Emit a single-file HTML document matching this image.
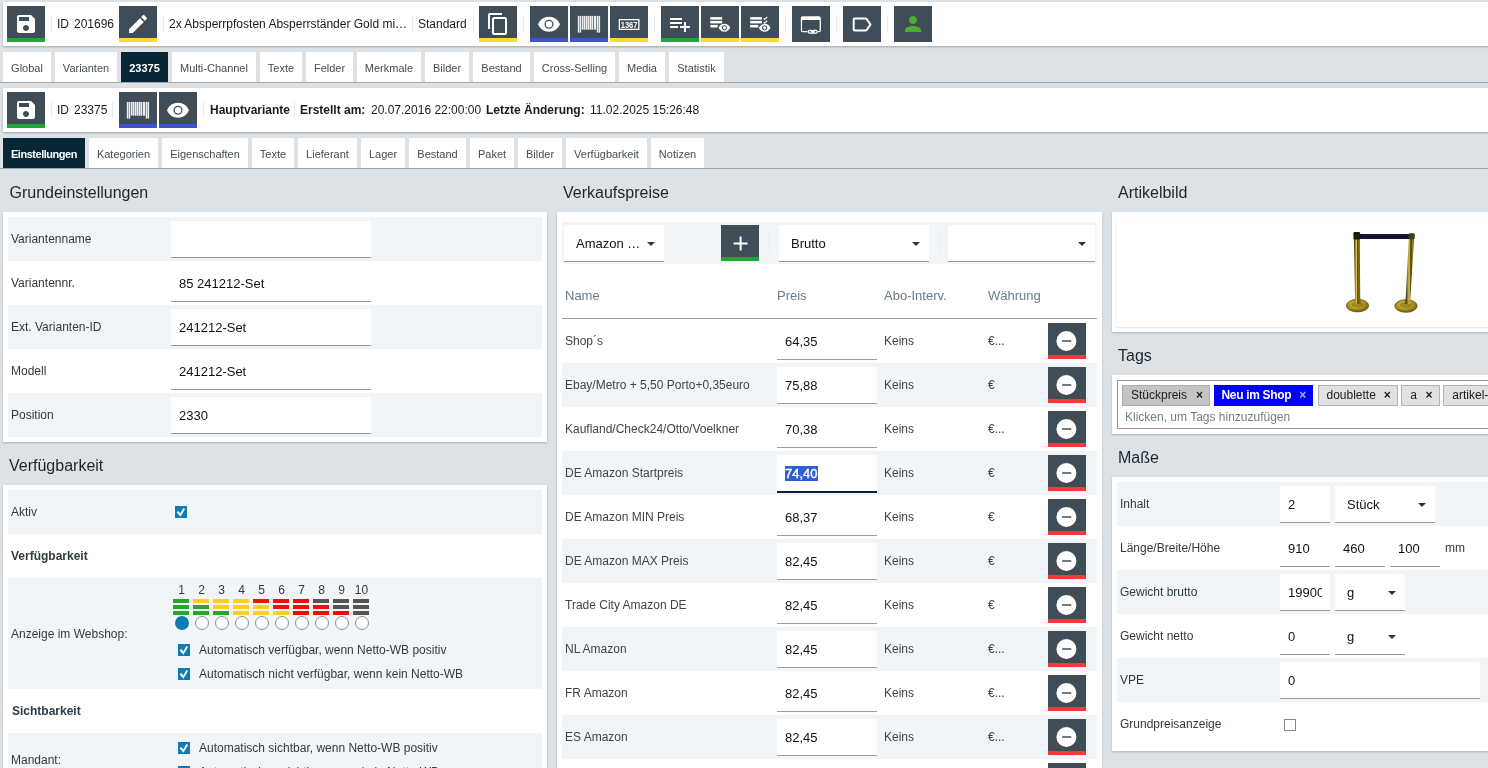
<!DOCTYPE html>
<html lang="de"><head><meta charset="utf-8"><title>Artikel 201696</title>
<style>
*{box-sizing:border-box;margin:0;padding:0}
html,body{width:1488px;height:768px;overflow:hidden}
body{background:#dde2e6;font-family:"Liberation Sans",sans-serif;color:#141c22;position:relative;font-size:12px}
.abs,.t,.btn,.sep,.tab,.inp,.chk,.panel,.row,.bar{position:absolute}
.bar{background:#fff;box-shadow:0 1px 2px rgba(0,0,0,.28)}
.btn{width:38px;height:36px;background:#3e4d57;display:flex;align-items:center;justify-content:center}
.btn svg{display:block}
.sep{width:1px;background:#e8ebee}
.t{white-space:nowrap;line-height:16px}
.b{font-weight:bold}
.tab{height:30px;background:#fff;color:#414e57;font-size:11px;line-height:32px;text-align:center;white-space:nowrap}
.tab.on{background:#072736;color:#fff;font-weight:bold}
.line{position:absolute;left:0;width:1488px;height:1px;background:#9ca6ac}
.h{position:absolute;font-size:16px;line-height:20px;color:#1c262d;white-space:nowrap}
.panel{background:#fff;box-shadow:0 1px 2px rgba(0,0,0,.22)}
.row{height:44px}
.row.alt{background:#f1f5f8}
.lbl{font-size:12px;color:#2f3b43}
.inp{height:37px;background:#fff;border-bottom:1px solid #929da4;font-size:13px;line-height:37.5px;padding-left:8px;white-space:nowrap;overflow:hidden;color:#0c1216}
.inp.tr{background:transparent}
.arw{position:absolute;right:9px;top:17px;line-height:0}
.chk{width:12px;height:12px;background:#fff;border:1px solid #7d8890}
.chk.on{background:#0f7bb4;border:none}
.chk svg{display:block}
.th{font-size:13px;color:#6b7a84}
.td{font-size:12px;color:#3a464e}
.tag{position:absolute;height:20.5px;top:385.2px;font-size:12px;line-height:19px;border:1px solid #b4b4b4;background:#e1e1e1;color:#1c1c1c;white-space:nowrap;padding-left:8px}
.tag i{position:absolute;right:6px;top:0;font-style:normal;font-weight:bold;font-size:12px}
#app{position:absolute;left:0;top:0;width:1488px;height:768px;overflow:hidden;will-change:transform;background:#dde2e6}
</style></head><body><div id="app">

<div class="bar" style="left:3px;top:2px;width:1490px;height:44px"></div>
<div class="btn " style="left:7px;top:6px;box-shadow:inset 0 -4px 0 #1fa538"><svg viewBox="0 0 24 24" width="24" height="24" fill="#fff"><path d="M17 3H5c-1.11 0-2 .9-2 2v14c0 1.1.89 2 2 2h14c1.1 0 2-.9 2-2V7l-4-4zm-5 16c-1.66 0-3-1.34-3-3s1.34-3 3-3 3 1.34 3 3-1.34 3-3 3zm3-10H5V5h10v4z"/></svg></div>
<div class="sep" style="left:51px;top:16px;height:16px"></div>
<div class="t " style="left:57px;top:16px;">ID</div>
<div class="t " style="left:74px;top:16px;">201696</div>
<div class="btn " style="left:119px;top:6px;box-shadow:inset 0 -4px 0 #ffd83a"><svg viewBox="0 0 24 24" width="24" height="24" fill="#fff"><path d="M3 17.25V21h3.75L17.81 9.94l-3.75-3.75L3 17.25zM20.71 7.04c.39-.39.39-1.02 0-1.41l-2.34-2.34c-.39-.39-1.02-.39-1.41 0l-1.83 1.83 3.75 3.75 1.83-1.83z"/></svg></div>
<div class="sep" style="left:163px;top:16px;height:16px"></div>
<div class="t " style="left:169px;top:16px;">2x Absperrpfosten Absperrständer Gold mi…</div>
<div class="sep" style="left:412px;top:16px;height:16px"></div>
<div class="t " style="left:418px;top:16px;">Standard</div>
<div class="sep" style="left:473px;top:16px;height:16px"></div>
<div class="btn " style="left:479px;top:6px;box-shadow:inset 0 -4px 0 #ffd83a"><svg viewBox="0 0 24 24" width="24" height="24" fill="#fff"><path d="M16 1H4c-1.1 0-2 .9-2 2v14h2V3h12V1zm3 4H8c-1.1 0-2 .9-2 2v14c0 1.1.9 2 2 2h11c1.1 0 2-.9 2-2V7c0-1.1-.9-2-2-2zm0 16H8V7h11v14z"/></svg></div>
<div class="sep" style="left:523px;top:16px;height:16px"></div>
<div class="btn " style="left:530px;top:6px;box-shadow:inset 0 -4px 0 #3f51d5"><svg viewBox="0 0 24 24" width="24" height="24" fill="#fff"><path d="M12 4.5C7 4.5 2.73 7.61 1 12c1.73 4.39 6 7.5 11 7.5s9.27-3.11 11-7.5c-1.73-4.39-6-7.5-11-7.5zM12 16.5a4.5 4.5 0 1 1 0-9 4.5 4.5 0 0 1 0 9zm0-7.7a3.2 3.2 0 1 0 0 6.4 3.2 3.2 0 0 0 0-6.4z" transform="translate(0 .2)"/></svg></div>
<div class="btn " style="left:570px;top:6px;box-shadow:inset 0 -4px 0 #3f51d5"><svg viewBox="0 0 24 24" width="24" height="24" fill="#fff"><g fill="#eceeef"><rect x="0.8" y="3.9" width="1.45" height="16.7"/><rect x="2.6" y="3.9" width="1.55" height="16.7"/><rect x="4.8" y="3.9" width="1.7" height="13.8"/><rect x="6.85" y="3.9" width="1.35" height="13.8"/><rect x="8.6" y="3.9" width="1.4" height="13.8"/><rect x="10.4" y="3.9" width="1.9" height="13.8"/><rect x="12.65" y="3.9" width="1.35" height="13.8"/><rect x="14.35" y="3.9" width="1.85" height="13.8"/><rect x="16.9" y="3.9" width="2.3" height="13.8"/><rect x="19.8" y="3.9" width="1.65" height="16.7"/><rect x="21.75" y="3.9" width="1.35" height="16.7"/></g></svg></div>
<div class="btn " style="left:610px;top:6px;box-shadow:inset 0 -4px 0 #ffd83a"><svg viewBox="0 0 24 24" width="24" height="24" fill="#fff"><path fill-rule="evenodd" d="M1.7 6.9h20.8v11.2H1.7zM3 8.2v8.6h18.2V8.2z"/><text x="12.1" y="15.5" font-family="Liberation Sans, sans-serif" font-weight="bold" font-size="9.2" text-anchor="middle" textLength="16.8" lengthAdjust="spacingAndGlyphs">1367</text></svg></div>
<div class="sep" style="left:654px;top:16px;height:16px"></div>
<div class="btn " style="left:661px;top:6px;box-shadow:inset 0 -4px 0 #1fa538"><svg viewBox="0 0 24 24" width="24" height="24" fill="#fff"><path d="M14 10H2v2h12v-2zm0-4H2v2h12V6zm4 8v-4h-2v4h-4v2h4v4h2v-4h4v-2h-4zM2 16h8v-2H2v2z"/></svg></div>
<div class="btn " style="left:701px;top:6px;box-shadow:inset 0 -4px 0 #ffd83a"><svg viewBox="0 0 24 24" width="24" height="24" fill="#fff"><rect x="2.3" y="5.1" width="11.9" height="2.5"/><rect x="2.3" y="8.9" width="11.9" height="2.5"/><rect x="2.3" y="12.9" width="7.4" height="2.6"/><g transform="translate(10.08 9.48) scale(.527)"><path d="M12 4.5C7 4.5 2.73 7.61 1 12c1.73 4.39 6 7.5 11 7.5s9.27-3.11 11-7.5c-1.73-4.39-6-7.5-11-7.5zM12 17c-2.76 0-5-2.24-5-5s2.24-5 5-5 5 2.24 5 5-2.24 5-5 5zm0-8c-1.66 0-3 1.34-3 3s1.34 3 3 3 3-1.34 3-3-1.34-3-3-3z"/></g></svg></div>
<div class="btn " style="left:741px;top:6px;box-shadow:inset 0 -4px 0 #ffd83a"><svg viewBox="0 0 24 24" width="24" height="24" fill="#fff"><rect x="2.1" y="5.1" width="11.9" height="2.5"/><rect x="2.1" y="8.9" width="11.9" height="2.5"/><rect x="2.1" y="12.9" width="8.2" height="2.6"/><path d="M15.6 6.3l1.15 1.15 2.5-2.5" fill="none" stroke="#fff" stroke-width="1.2"/><path d="M15.6 9.9l1.15 1.15 2.5-2.5" fill="none" stroke="#fff" stroke-width="1.2"/><g transform="translate(10.33 9.48) scale(.527)"><path d="M12 4.5C7 4.5 2.73 7.61 1 12c1.73 4.39 6 7.5 11 7.5s9.27-3.11 11-7.5c-1.73-4.39-6-7.5-11-7.5zM12 17c-2.76 0-5-2.24-5-5s2.24-5 5-5 5 2.24 5 5-2.24 5-5 5zm0-8c-1.66 0-3 1.34-3 3s1.34 3 3 3 3-1.34 3-3-1.34-3-3-3z"/></g></svg></div>
<div class="sep" style="left:785px;top:16px;height:16px"></div>
<div class="btn " style="left:792px;top:6px;box-shadow:inset 0 -4px 0 #3e4d57"><svg viewBox="0 0 24 24" width="24" height="24" fill="#fff"><path fill-rule="evenodd" d="M3.8 4.2h16.1a2 2 0 0 1 2 2v12a2 2 0 0 1-2 2H3.8a2 2 0 0 1-2-2v-12a2 2 0 0 1 2-2zM3.1 7.9v11h17.5v-11z"/><rect x="8.2" y="17.4" width="11" height="4.6" rx="2.3" fill="#3e4d57"/><g fill="none" stroke="#fff" stroke-width="1.25"><rect x="9.2" y="18.4" width="5.2" height="2.7" rx="1.35"/><rect x="13" y="18.4" width="5.2" height="2.7" rx="1.35"/></g><rect x="11.6" y="19.2" width="4.2" height="1.1"/></svg></div>
<div class="sep" style="left:836px;top:16px;height:16px"></div>
<div class="btn " style="left:843px;top:6px;box-shadow:inset 0 -4px 0 #3e4d57"><svg viewBox="0 0 24 24" width="24" height="24" fill="#fff"><path transform="translate(-.3 .5)" d="M17.63 5.84C17.27 5.33 16.67 5 16 5L5 5.01C3.9 5.01 3 5.9 3 7v10c0 1.1.9 1.99 2 1.99L16 19c.67 0 1.27-.33 1.63-.84L22 12l-4.37-6.16zM16 17H5V7h11l3.55 5L16 17z"/></svg></div>
<div class="sep" style="left:887px;top:16px;height:16px"></div>
<div class="btn " style="left:894px;top:6px;box-shadow:inset 0 -4px 0 #3e4d57"><svg viewBox="0 0 24 24" width="24" height="24" fill="#fff"><path fill="#4caf2f" d="M12 12c2.21 0 4-1.79 4-4s-1.79-4-4-4-4 1.79-4 4 1.79 4 4 4zm0 2c-2.67 0-8 1.34-8 4v2h16v-2c0-2.66-5.33-4-8-4z"/></svg></div>
<div class="tab" style="left:3px;top:52px;width:48px;">Global</div>
<div class="tab" style="left:55px;top:52px;width:62px;">Varianten</div>
<div class="tab on" style="left:121px;top:52px;width:47px;">23375</div>
<div class="tab" style="left:172px;top:52px;width:84px;">Multi-Channel</div>
<div class="tab" style="left:260px;top:52px;width:42px;">Texte</div>
<div class="tab" style="left:306px;top:52px;width:47px;">Felder</div>
<div class="tab" style="left:357px;top:52px;width:64px;">Merkmale</div>
<div class="tab" style="left:425px;top:52px;width:44px;">Bilder</div>
<div class="tab" style="left:473px;top:52px;width:57px;">Bestand</div>
<div class="tab" style="left:534px;top:52px;width:81px;">Cross-Selling</div>
<div class="tab" style="left:619px;top:52px;width:46px;">Media</div>
<div class="tab" style="left:669px;top:52px;width:55px;">Statistik</div>
<div class="line" style="top:82px"></div>
<div class="bar" style="left:3px;top:88px;width:1490px;height:44px"></div>
<div class="btn " style="left:7px;top:92px;box-shadow:inset 0 -4px 0 #1fa538"><svg viewBox="0 0 24 24" width="24" height="24" fill="#fff"><path d="M17 3H5c-1.11 0-2 .9-2 2v14c0 1.1.89 2 2 2h14c1.1 0 2-.9 2-2V7l-4-4zm-5 16c-1.66 0-3-1.34-3-3s1.34-3 3-3 3 1.34 3 3-1.34 3-3 3zm3-10H5V5h10v4z"/></svg></div>
<div class="sep" style="left:51px;top:102px;height:16px"></div>
<div class="t " style="left:57px;top:102px;">ID</div>
<div class="t " style="left:74px;top:102px;">23375</div>
<div class="sep" style="left:112px;top:102px;height:16px"></div>
<div class="btn " style="left:119px;top:92px;box-shadow:inset 0 -4px 0 #3f51d5"><svg viewBox="0 0 24 24" width="24" height="24" fill="#fff"><g fill="#eceeef"><rect x="0.8" y="3.9" width="1.45" height="16.7"/><rect x="2.6" y="3.9" width="1.55" height="16.7"/><rect x="4.8" y="3.9" width="1.7" height="13.8"/><rect x="6.85" y="3.9" width="1.35" height="13.8"/><rect x="8.6" y="3.9" width="1.4" height="13.8"/><rect x="10.4" y="3.9" width="1.9" height="13.8"/><rect x="12.65" y="3.9" width="1.35" height="13.8"/><rect x="14.35" y="3.9" width="1.85" height="13.8"/><rect x="16.9" y="3.9" width="2.3" height="13.8"/><rect x="19.8" y="3.9" width="1.65" height="16.7"/><rect x="21.75" y="3.9" width="1.35" height="16.7"/></g></svg></div>
<div class="btn " style="left:159px;top:92px;box-shadow:inset 0 -4px 0 #3f51d5"><svg viewBox="0 0 24 24" width="24" height="24" fill="#fff"><path d="M12 4.5C7 4.5 2.73 7.61 1 12c1.73 4.39 6 7.5 11 7.5s9.27-3.11 11-7.5c-1.73-4.39-6-7.5-11-7.5zM12 16.5a4.5 4.5 0 1 1 0-9 4.5 4.5 0 0 1 0 9zm0-7.7a3.2 3.2 0 1 0 0 6.4 3.2 3.2 0 0 0 0-6.4z" transform="translate(0 .2)"/></svg></div>
<div class="sep" style="left:203px;top:102px;height:16px"></div>
<div class="t b" style="left:210px;top:102px;">Hauptvariante</div>
<div class="sep" style="left:294px;top:102px;height:16px"></div>
<div class="t b" style="left:300px;top:102px;">Erstellt am:</div>
<div class="t " style="left:371px;top:102px;">20.07.2016 22:00:00</div>
<div class="t b" style="left:486px;top:102px;">Letzte Änderung:</div>
<div class="t " style="left:590px;top:102px;">11.02.2025 15:26:48</div>
<div class="tab on" style="left:3px;top:138px;width:82px;letter-spacing:-.47px;">Einstellungen</div>
<div class="tab" style="left:89px;top:138px;width:69px;">Kategorien</div>
<div class="tab" style="left:162px;top:138px;width:86px;">Eigenschaften</div>
<div class="tab" style="left:252px;top:138px;width:42px;">Texte</div>
<div class="tab" style="left:298px;top:138px;width:59px;">Lieferant</div>
<div class="tab" style="left:361px;top:138px;width:44px;">Lager</div>
<div class="tab" style="left:409px;top:138px;width:57px;">Bestand</div>
<div class="tab" style="left:470px;top:138px;width:44px;">Paket</div>
<div class="tab" style="left:518px;top:138px;width:44px;">Bilder</div>
<div class="tab" style="left:566px;top:138px;width:81px;">Verfügbarkeit</div>
<div class="tab" style="left:651px;top:138px;width:53px;">Notizen</div>
<div class="line" style="top:168px"></div>
<div class="h" style="left:9.5px;top:183px">Grundeinstellungen</div>
<div class="panel" style="left:3px;top:212px;width:544px;height:230px"></div>
<div class="row alt" style="left:8px;top:217px;width:534px"></div>
<div class="t lbl" style="left:11px;top:231px;">Variantenname</div>
<div class="inp " style="left:171px;top:221px;width:200px;"><span></span></div>
<div class="row" style="left:8px;top:261px;width:534px"></div>
<div class="t lbl" style="left:11px;top:275px;">Variantennr.</div>
<div class="inp " style="left:171px;top:265px;width:200px;"><span>85 241212-Set</span></div>
<div class="row alt" style="left:8px;top:305px;width:534px"></div>
<div class="t lbl" style="left:11px;top:319px;">Ext. Varianten-ID</div>
<div class="inp " style="left:171px;top:309px;width:200px;"><span>241212-Set</span></div>
<div class="row" style="left:8px;top:349px;width:534px"></div>
<div class="t lbl" style="left:11px;top:363px;">Modell</div>
<div class="inp " style="left:171px;top:353px;width:200px;"><span>241212-Set</span></div>
<div class="row alt" style="left:8px;top:393px;width:534px"></div>
<div class="t lbl" style="left:11px;top:407px;">Position</div>
<div class="inp " style="left:171px;top:397px;width:200px;"><span>2330</span></div>
<div class="h" style="left:9px;top:456px">Verfügbarkeit</div>
<div class="panel" style="left:3px;top:485px;width:544px;height:300px"></div>
<div class="row alt" style="left:8px;top:490px;width:534px"></div>
<div class="t lbl" style="left:11px;top:504px;">Aktiv</div>
<div class="chk on" style="left:175px;top:506px"><svg viewBox="0 0 12 12" width="12" height="12"><path d="M2.4 5.7l2.9 3.5 3.9-6.7" fill="none" stroke="#fff" stroke-width="1.9"/></svg></div>
<div class="t lbl b" style="left:11px;top:548px;">Verfügbarkeit</div>
<div class="row alt" style="left:8px;top:578px;width:534px;height:111px"></div>
<div class="t lbl" style="left:11px;top:626px;">Anzeige im Webshop:</div>
<div class="t" style="left:167.5px;top:582px;width:28px;text-align:center;color:#2f3b43">1</div>
<div class="abs" style="left:173px;top:599px;width:16px;height:4px;background:#2aa52a"></div>
<div class="abs" style="left:173px;top:605px;width:16px;height:4px;background:#2aa52a"></div>
<div class="abs" style="left:173px;top:611px;width:16px;height:4px;background:#2aa52a"></div>
<div class="abs" style="left:175px;top:616px;width:14px;height:14px;border-radius:50%;background:#0f7bb4"></div>
<div class="t" style="left:187.5px;top:582px;width:28px;text-align:center;color:#2f3b43">2</div>
<div class="abs" style="left:193px;top:599px;width:16px;height:4px;background:#ffcf1f"></div>
<div class="abs" style="left:193px;top:605px;width:16px;height:4px;background:#2aa52a"></div>
<div class="abs" style="left:193px;top:611px;width:16px;height:4px;background:#2aa52a"></div>
<div class="abs" style="left:195px;top:616px;width:14px;height:14px;border-radius:50%;background:#fff;border:1px solid #8a9298"></div>
<div class="t" style="left:207.5px;top:582px;width:28px;text-align:center;color:#2f3b43">3</div>
<div class="abs" style="left:213px;top:599px;width:16px;height:4px;background:#ffcf1f"></div>
<div class="abs" style="left:213px;top:605px;width:16px;height:4px;background:#ffcf1f"></div>
<div class="abs" style="left:213px;top:611px;width:16px;height:4px;background:#2aa52a"></div>
<div class="abs" style="left:215px;top:616px;width:14px;height:14px;border-radius:50%;background:#fff;border:1px solid #8a9298"></div>
<div class="t" style="left:227.5px;top:582px;width:28px;text-align:center;color:#2f3b43">4</div>
<div class="abs" style="left:233px;top:599px;width:16px;height:4px;background:#ffcf1f"></div>
<div class="abs" style="left:233px;top:605px;width:16px;height:4px;background:#ffcf1f"></div>
<div class="abs" style="left:233px;top:611px;width:16px;height:4px;background:#ffcf1f"></div>
<div class="abs" style="left:235px;top:616px;width:14px;height:14px;border-radius:50%;background:#fff;border:1px solid #8a9298"></div>
<div class="t" style="left:247.5px;top:582px;width:28px;text-align:center;color:#2f3b43">5</div>
<div class="abs" style="left:253px;top:599px;width:16px;height:4px;background:#f00d0d"></div>
<div class="abs" style="left:253px;top:605px;width:16px;height:4px;background:#ffcf1f"></div>
<div class="abs" style="left:253px;top:611px;width:16px;height:4px;background:#ffcf1f"></div>
<div class="abs" style="left:255px;top:616px;width:14px;height:14px;border-radius:50%;background:#fff;border:1px solid #8a9298"></div>
<div class="t" style="left:267.5px;top:582px;width:28px;text-align:center;color:#2f3b43">6</div>
<div class="abs" style="left:273px;top:599px;width:16px;height:4px;background:#f00d0d"></div>
<div class="abs" style="left:273px;top:605px;width:16px;height:4px;background:#f00d0d"></div>
<div class="abs" style="left:273px;top:611px;width:16px;height:4px;background:#ffcf1f"></div>
<div class="abs" style="left:275px;top:616px;width:14px;height:14px;border-radius:50%;background:#fff;border:1px solid #8a9298"></div>
<div class="t" style="left:287.5px;top:582px;width:28px;text-align:center;color:#2f3b43">7</div>
<div class="abs" style="left:293px;top:599px;width:16px;height:4px;background:#f00d0d"></div>
<div class="abs" style="left:293px;top:605px;width:16px;height:4px;background:#f00d0d"></div>
<div class="abs" style="left:293px;top:611px;width:16px;height:4px;background:#f00d0d"></div>
<div class="abs" style="left:295px;top:616px;width:14px;height:14px;border-radius:50%;background:#fff;border:1px solid #8a9298"></div>
<div class="t" style="left:307.5px;top:582px;width:28px;text-align:center;color:#2f3b43">8</div>
<div class="abs" style="left:313px;top:599px;width:16px;height:4px;background:#555"></div>
<div class="abs" style="left:313px;top:605px;width:16px;height:4px;background:#f00d0d"></div>
<div class="abs" style="left:313px;top:611px;width:16px;height:4px;background:#f00d0d"></div>
<div class="abs" style="left:315px;top:616px;width:14px;height:14px;border-radius:50%;background:#fff;border:1px solid #8a9298"></div>
<div class="t" style="left:327.5px;top:582px;width:28px;text-align:center;color:#2f3b43">9</div>
<div class="abs" style="left:333px;top:599px;width:16px;height:4px;background:#555"></div>
<div class="abs" style="left:333px;top:605px;width:16px;height:4px;background:#555"></div>
<div class="abs" style="left:333px;top:611px;width:16px;height:4px;background:#f00d0d"></div>
<div class="abs" style="left:335px;top:616px;width:14px;height:14px;border-radius:50%;background:#fff;border:1px solid #8a9298"></div>
<div class="t" style="left:347.5px;top:582px;width:28px;text-align:center;color:#2f3b43">10</div>
<div class="abs" style="left:353px;top:599px;width:16px;height:4px;background:#555"></div>
<div class="abs" style="left:353px;top:605px;width:16px;height:4px;background:#555"></div>
<div class="abs" style="left:353px;top:611px;width:16px;height:4px;background:#555"></div>
<div class="abs" style="left:355px;top:616px;width:14px;height:14px;border-radius:50%;background:#fff;border:1px solid #8a9298"></div>
<div class="chk on" style="left:178px;top:644px"><svg viewBox="0 0 12 12" width="12" height="12"><path d="M2.4 5.7l2.9 3.5 3.9-6.7" fill="none" stroke="#fff" stroke-width="1.9"/></svg></div>
<div class="t lbl" style="left:199px;top:642px;">Automatisch verfügbar, wenn Netto-WB positiv</div>
<div class="chk on" style="left:178px;top:668px"><svg viewBox="0 0 12 12" width="12" height="12"><path d="M2.4 5.7l2.9 3.5 3.9-6.7" fill="none" stroke="#fff" stroke-width="1.9"/></svg></div>
<div class="t lbl" style="left:199px;top:666px;">Automatisch nicht verfügbar, wenn kein Netto-WB</div>
<div class="t lbl b" style="left:12px;top:703px;">Sichtbarkeit</div>
<div class="row alt" style="left:8px;top:733px;width:534px;height:60px"></div>
<div class="t lbl" style="left:11px;top:752px;">Mandant:</div>
<div class="chk on" style="left:178px;top:742px"><svg viewBox="0 0 12 12" width="12" height="12"><path d="M2.4 5.7l2.9 3.5 3.9-6.7" fill="none" stroke="#fff" stroke-width="1.9"/></svg></div>
<div class="t lbl" style="left:199px;top:740px;">Automatisch sichtbar, wenn Netto-WB positiv</div>
<div class="chk on" style="left:178px;top:766px"><svg viewBox="0 0 12 12" width="12" height="12"><path d="M2.4 5.7l2.9 3.5 3.9-6.7" fill="none" stroke="#fff" stroke-width="1.9"/></svg></div>
<div class="t lbl" style="left:199px;top:764px;">Automatisch unsichtbar, wenn kein Netto-WB</div>
<div class="h" style="left:563px;top:183px">Verkaufspreise</div>
<div class="panel" style="left:557px;top:212px;width:545px;height:570px"></div>
<div class="row alt" style="left:562px;top:222px;width:535px;height:41.5px"></div>
<div class="inp " style="left:564px;top:225px;width:100px;padding-left:12px"><span>Amazon …</span><span class="arw"><svg class="arr" viewBox="0 0 8 4" width="8" height="4"><path d="M0 0l4 4 4-4z" fill="#2b363d"/></svg></span></div>
<div class="btn " style="left:721px;top:225px;box-shadow:inset 0 -4px 0 #1fa538"><svg viewBox="0 0 24 24" width="24" height="24" fill="#fff"><path transform="translate(.6 .5)" d="M19 13h-6v6h-2v-6H5v-2h6V5h2v6h6v2z"/></svg></div>
<div class="sep" style="left:769px;top:232px;height:20px"></div>
<div class="inp " style="left:779px;top:225px;width:150px;padding-left:12px"><span>Brutto</span><span class="arw"><svg class="arr" viewBox="0 0 8 4" width="8" height="4"><path d="M0 0l4 4 4-4z" fill="#2b363d"/></svg></span></div>
<div class="sep" style="left:939px;top:232px;height:20px"></div>
<div class="inp " style="left:948px;top:225px;width:147px;"><span></span><span class="arw"><svg class="arr" viewBox="0 0 8 4" width="8" height="4"><path d="M0 0l4 4 4-4z" fill="#2b363d"/></svg></span></div>
<div class="t th" style="left:565px;top:288px;">Name</div>
<div class="t th" style="left:777px;top:288px;">Preis</div>
<div class="t th" style="left:884px;top:288px;">Abo-Interv.</div>
<div class="t th" style="left:988px;top:288px;">Währung</div>
<div class="abs" style="left:562px;top:318px;width:535px;height:1px;background:#97a1a7"></div>
<div class="row" style="left:562px;top:319px;width:535px"></div>
<div class="t td" style="left:565px;top:333px;">Shop´s</div>
<div class="inp " style="left:777px;top:323px;width:100px;"><span>64,35</span></div>
<div class="t td" style="left:884px;top:333px;">Keins</div>
<div class="t td" style="left:988px;top:333px;">€...</div>
<div class="btn " style="left:1048px;top:323px;box-shadow:inset 0 -4px 0 #ef3b3b"><svg viewBox="0 0 24 24" width="24" height="24" fill="#fff"><path fill-rule="evenodd" d="M11.4 2a10 10 0 1 0 0 20a10 10 0 1 0 0-20zM7.1 11.3h9.1v1.5H7.1z"/></svg></div>
<div class="row alt" style="left:562px;top:363px;width:535px"></div>
<div class="t td" style="left:565px;top:377px;">Ebay/Metro + 5,50 Porto+0,35euro</div>
<div class="inp " style="left:777px;top:367px;width:100px;"><span>75,88</span></div>
<div class="t td" style="left:884px;top:377px;">Keins</div>
<div class="t td" style="left:988px;top:377px;">€</div>
<div class="btn " style="left:1048px;top:367px;box-shadow:inset 0 -4px 0 #ef3b3b"><svg viewBox="0 0 24 24" width="24" height="24" fill="#fff"><path fill-rule="evenodd" d="M11.4 2a10 10 0 1 0 0 20a10 10 0 1 0 0-20zM7.1 11.3h9.1v1.5H7.1z"/></svg></div>
<div class="row" style="left:562px;top:407px;width:535px"></div>
<div class="t td" style="left:565px;top:421px;">Kaufland/Check24/Otto/Voelkner</div>
<div class="inp " style="left:777px;top:411px;width:100px;"><span>70,38</span></div>
<div class="t td" style="left:884px;top:421px;">Keins</div>
<div class="t td" style="left:988px;top:421px;">€...</div>
<div class="btn " style="left:1048px;top:411px;box-shadow:inset 0 -4px 0 #ef3b3b"><svg viewBox="0 0 24 24" width="24" height="24" fill="#fff"><path fill-rule="evenodd" d="M11.4 2a10 10 0 1 0 0 20a10 10 0 1 0 0-20zM7.1 11.3h9.1v1.5H7.1z"/></svg></div>
<div class="row alt" style="left:562px;top:451px;width:535px"></div>
<div class="t td" style="left:565px;top:465px;">DE Amazon Startpreis</div>
<div class="inp " style="left:777px;top:455px;width:100px;border-bottom:2px solid #072736;height:38px"><span><span style="background:#2f5fd0;color:#fff;-webkit-text-stroke:.35px #fff">74,40</span></span></div>
<div class="t td" style="left:884px;top:465px;">Keins</div>
<div class="t td" style="left:988px;top:465px;">€</div>
<div class="btn " style="left:1048px;top:455px;box-shadow:inset 0 -4px 0 #ef3b3b"><svg viewBox="0 0 24 24" width="24" height="24" fill="#fff"><path fill-rule="evenodd" d="M11.4 2a10 10 0 1 0 0 20a10 10 0 1 0 0-20zM7.1 11.3h9.1v1.5H7.1z"/></svg></div>
<div class="row" style="left:562px;top:495px;width:535px"></div>
<div class="t td" style="left:565px;top:509px;">DE Amazon MIN Preis</div>
<div class="inp " style="left:777px;top:499px;width:100px;"><span>68,37</span></div>
<div class="t td" style="left:884px;top:509px;">Keins</div>
<div class="t td" style="left:988px;top:509px;">€</div>
<div class="btn " style="left:1048px;top:499px;box-shadow:inset 0 -4px 0 #ef3b3b"><svg viewBox="0 0 24 24" width="24" height="24" fill="#fff"><path fill-rule="evenodd" d="M11.4 2a10 10 0 1 0 0 20a10 10 0 1 0 0-20zM7.1 11.3h9.1v1.5H7.1z"/></svg></div>
<div class="row alt" style="left:562px;top:539px;width:535px"></div>
<div class="t td" style="left:565px;top:553px;">DE Amazon MAX Preis</div>
<div class="inp " style="left:777px;top:543px;width:100px;"><span>82,45</span></div>
<div class="t td" style="left:884px;top:553px;">Keins</div>
<div class="t td" style="left:988px;top:553px;">€</div>
<div class="btn " style="left:1048px;top:543px;box-shadow:inset 0 -4px 0 #ef3b3b"><svg viewBox="0 0 24 24" width="24" height="24" fill="#fff"><path fill-rule="evenodd" d="M11.4 2a10 10 0 1 0 0 20a10 10 0 1 0 0-20zM7.1 11.3h9.1v1.5H7.1z"/></svg></div>
<div class="row" style="left:562px;top:583px;width:535px"></div>
<div class="t td" style="left:565px;top:597px;">Trade City Amazon DE</div>
<div class="inp " style="left:777px;top:587px;width:100px;"><span>82,45</span></div>
<div class="t td" style="left:884px;top:597px;">Keins</div>
<div class="t td" style="left:988px;top:597px;">€</div>
<div class="btn " style="left:1048px;top:587px;box-shadow:inset 0 -4px 0 #ef3b3b"><svg viewBox="0 0 24 24" width="24" height="24" fill="#fff"><path fill-rule="evenodd" d="M11.4 2a10 10 0 1 0 0 20a10 10 0 1 0 0-20zM7.1 11.3h9.1v1.5H7.1z"/></svg></div>
<div class="row alt" style="left:562px;top:627px;width:535px"></div>
<div class="t td" style="left:565px;top:641px;">NL Amazon</div>
<div class="inp " style="left:777px;top:631px;width:100px;"><span>82,45</span></div>
<div class="t td" style="left:884px;top:641px;">Keins</div>
<div class="t td" style="left:988px;top:641px;">€...</div>
<div class="btn " style="left:1048px;top:631px;box-shadow:inset 0 -4px 0 #ef3b3b"><svg viewBox="0 0 24 24" width="24" height="24" fill="#fff"><path fill-rule="evenodd" d="M11.4 2a10 10 0 1 0 0 20a10 10 0 1 0 0-20zM7.1 11.3h9.1v1.5H7.1z"/></svg></div>
<div class="row" style="left:562px;top:671px;width:535px"></div>
<div class="t td" style="left:565px;top:685px;">FR Amazon</div>
<div class="inp " style="left:777px;top:675px;width:100px;"><span>82,45</span></div>
<div class="t td" style="left:884px;top:685px;">Keins</div>
<div class="t td" style="left:988px;top:685px;">€...</div>
<div class="btn " style="left:1048px;top:675px;box-shadow:inset 0 -4px 0 #ef3b3b"><svg viewBox="0 0 24 24" width="24" height="24" fill="#fff"><path fill-rule="evenodd" d="M11.4 2a10 10 0 1 0 0 20a10 10 0 1 0 0-20zM7.1 11.3h9.1v1.5H7.1z"/></svg></div>
<div class="row alt" style="left:562px;top:715px;width:535px"></div>
<div class="t td" style="left:565px;top:729px;">ES Amazon</div>
<div class="inp " style="left:777px;top:719px;width:100px;"><span>82,45</span></div>
<div class="t td" style="left:884px;top:729px;">Keins</div>
<div class="t td" style="left:988px;top:729px;">€...</div>
<div class="btn " style="left:1048px;top:719px;box-shadow:inset 0 -4px 0 #ef3b3b"><svg viewBox="0 0 24 24" width="24" height="24" fill="#fff"><path fill-rule="evenodd" d="M11.4 2a10 10 0 1 0 0 20a10 10 0 1 0 0-20zM7.1 11.3h9.1v1.5H7.1z"/></svg></div>
<div class="row" style="left:562px;top:759px;width:535px"></div>
<div class="t td" style="left:565px;top:773px;">IT Amazon</div>
<div class="inp " style="left:777px;top:763px;width:100px;"><span>82,45</span></div>
<div class="t td" style="left:884px;top:773px;">Keins</div>
<div class="t td" style="left:988px;top:773px;">€...</div>
<div class="btn " style="left:1048px;top:763px;box-shadow:inset 0 -4px 0 #ef3b3b"><svg viewBox="0 0 24 24" width="24" height="24" fill="#fff"><path fill-rule="evenodd" d="M11.4 2a10 10 0 1 0 0 20a10 10 0 1 0 0-20zM7.1 11.3h9.1v1.5H7.1z"/></svg></div>
<div class="h" style="left:1118px;top:183px">Artikelbild</div>
<div class="panel" style="left:1112px;top:212px;width:400px;height:120px"></div>
<div class="abs" style="left:1117px;top:217px;width:400px;height:110px;box-shadow:0 1px 2px rgba(0,0,0,.12)"></div>
<svg class="abs" style="left:1340px;top:226px" width="90" height="92" viewBox="1340 226 90 92">
<defs><linearGradient id="gp" x1="0" x2="1" y1="0" y2="0"><stop offset="0" stop-color="#1e1903"/><stop offset=".22" stop-color="#8f7818"/><stop offset=".42" stop-color="#d9c452"/><stop offset=".62" stop-color="#3d320a"/><stop offset=".82" stop-color="#a58c20"/><stop offset="1" stop-color="#2a2206"/></linearGradient>
<radialGradient id="gb" cx=".45" cy=".4" r=".7"><stop offset="0" stop-color="#e2cd55"/><stop offset=".5" stop-color="#b3951c"/><stop offset="1" stop-color="#4e400a"/></radialGradient></defs>
<ellipse cx="1357.5" cy="305.6" rx="11.2" ry="6.3" fill="url(#gb)" stroke="#6b580e" stroke-width=".8"/><ellipse cx="1406" cy="306" rx="11.2" ry="6.3" fill="url(#gb)" stroke="#6b580e" stroke-width=".8"/><ellipse cx="1357.5" cy="304.6" rx="6" ry="3" fill="#8a7215" opacity=".7"/><ellipse cx="1406" cy="305" rx="6" ry="3" fill="#8a7215" opacity=".7"/>
<polygon points="1353.8,233 1359.8,233 1360.2,304 1355.2,304" fill="url(#gp)"/>
<polygon points="1409,234 1414.4,234 1410,304 1405.4,304" fill="url(#gp)"/>
<rect x="1359.5" y="234" width="50" height="5" fill="#14142e"/>
<rect x="1353.5" y="232" width="6.6" height="7.5" rx="1.2" fill="#1d1a10"/><rect x="1408.7" y="233.2" width="6" height="6" rx="1.2" fill="#4a3e12"/>
</svg>
<div class="h" style="left:1118px;top:346px">Tags</div>
<div class="panel" style="left:1112px;top:375px;width:400px;height:59px"></div>
<div class="abs" style="left:1117px;top:380px;width:400px;height:49px;border:1px solid #8d989f"></div>
<div class="tag" style="left:1122px;width:88px;background:#c4c4c4;border-color:#adadad">Stückpreis<i>×</i></div>
<div class="tag" style="left:1213.5px;width:99.7px;background:#0000ff;border-color:#0000ff;color:#fff;font-weight:bold;letter-spacing:-.33px;padding-left:7px">Neu im Shop<i style="color:#b4b4d4;letter-spacing:0">×</i></div>
<div class="tag" style="left:1317.5px;width:80.3px">doublette<i>×</i></div>
<div class="tag" style="left:1401.3px;width:38.3px">a<i>×</i></div>
<div class="tag" style="left:1443.3px;width:80px">artikel-update<i>×</i></div>
<div class="t " style="left:1125px;top:409px;color:#6f7f88">Klicken, um Tags hinzuzufügen</div>
<div class="h" style="left:1118px;top:448px">Maße</div>
<div class="panel" style="left:1112px;top:477px;width:400px;height:274px"></div>
<div class="row alt" style="left:1117px;top:482px;width:400px"></div>
<div class="t lbl" style="left:1120px;top:496px;">Inhalt</div>
<div class="row" style="left:1117px;top:526px;width:400px"></div>
<div class="t lbl" style="left:1120px;top:540px;">Länge/Breite/Höhe</div>
<div class="row alt" style="left:1117px;top:570px;width:400px"></div>
<div class="t lbl" style="left:1120px;top:584px;">Gewicht brutto</div>
<div class="row" style="left:1117px;top:614px;width:400px"></div>
<div class="t lbl" style="left:1120px;top:628px;">Gewicht netto</div>
<div class="row alt" style="left:1117px;top:658px;width:400px"></div>
<div class="t lbl" style="left:1120px;top:672px;">VPE</div>
<div class="row" style="left:1117px;top:702px;width:400px"></div>
<div class="t lbl" style="left:1120px;top:716px;">Grundpreisanzeige</div>
<div class="inp " style="left:1280px;top:486px;width:50px;"><span>2</span></div>
<div class="inp " style="left:1335px;top:486px;width:100px;padding-left:12px"><span>Stück</span><span class="arw"><svg class="arr" viewBox="0 0 8 4" width="8" height="4"><path d="M0 0l4 4 4-4z" fill="#2b363d"/></svg></span></div>
<div class="inp " style="left:1280px;top:530px;width:50px;"><span>910</span></div>
<div class="inp " style="left:1335px;top:530px;width:50px;"><span>460</span></div>
<div class="inp " style="left:1390px;top:530px;width:50px;"><span>100</span></div>
<div class="t lbl" style="left:1445px;top:540px;">mm</div>
<div class="inp " style="left:1280px;top:574px;width:50px;"><span><span style="display:block;width:34px;overflow:hidden">19900</span></span></div>
<div class="inp " style="left:1335px;top:574px;width:70px;padding-left:12px"><span>g</span><span class="arw"><svg class="arr" viewBox="0 0 8 4" width="8" height="4"><path d="M0 0l4 4 4-4z" fill="#2b363d"/></svg></span></div>
<div class="inp " style="left:1280px;top:618px;width:50px;"><span>0</span></div>
<div class="inp " style="left:1335px;top:618px;width:70px;padding-left:12px"><span>g</span><span class="arw"><svg class="arr" viewBox="0 0 8 4" width="8" height="4"><path d="M0 0l4 4 4-4z" fill="#2b363d"/></svg></span></div>
<div class="inp " style="left:1280px;top:662px;width:200px;"><span>0</span></div>
<div class="chk" style="left:1284px;top:719px"></div>
</div></body></html>
